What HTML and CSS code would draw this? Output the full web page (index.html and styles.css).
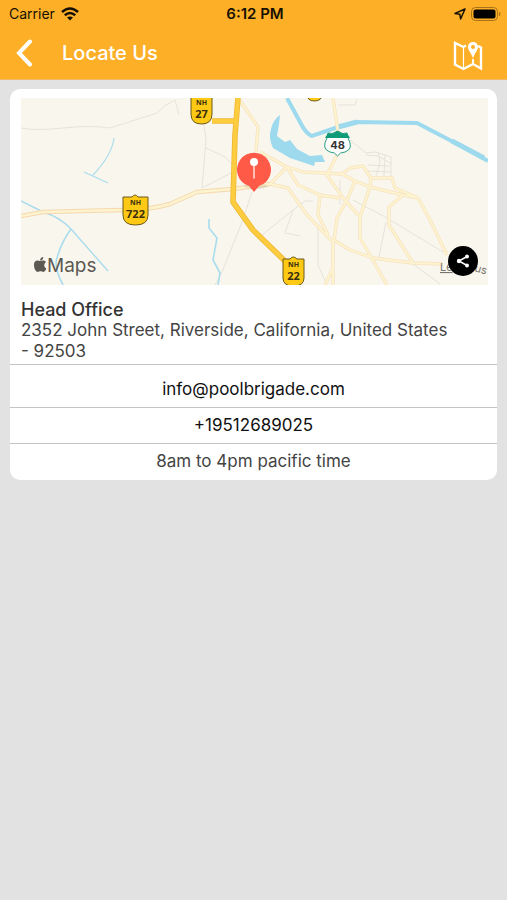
FILE: index.html
```html
<!DOCTYPE html>
<html lang="en">
<head>
    <meta charset="UTF-8">
    <meta name="viewport" content="width=device-width, initial-scale=1.0">
    <title>Locate Us</title>
    <link rel="stylesheet" href="styles.css">
</head>
<body>
    <header class="header">
        <div class="status-bar">
            <div class="status-left">
                <span>Carrier</span>
                <svg class="wifi" viewBox="0 0 18 14" width="18" height="14" fill="none" stroke="#161003" stroke-width="2.5">
                    <path d="M1 5 Q9 -2 17 5"/>
                    <path d="M3.8 8.2 Q9 3.8 14.2 8.2"/>
                    <path d="M9 13.5 L6 10.6 Q9 8.2 12 10.6 Z" fill="#161003" stroke="none"/>
                </svg>
            </div>
            <span class="time">6:12 PM</span>
            <div class="status-right">
                <svg viewBox="0 0 12 12" width="12" height="12" fill="none" stroke="#161003" stroke-width="1.5" stroke-linejoin="round">
                    <path d="M11 1 L1 5.4 L5.8 6.2 L6.6 11 Z"/>
                </svg>
                <svg viewBox="0 0 30 14" width="30" height="14">
                    <rect x="0.5" y="0.5" width="26" height="13" rx="4" fill="none" stroke="#a87318"/>
                    <rect x="2.5" y="2.5" width="22" height="9" rx="2" fill="#000"/>
                    <path d="M28 4.5 Q31 7 28 9.5 Z" fill="#a87318"/>
                </svg>
            </div>
        </div>
        <div class="nav-bar">
            <button class="icon-btn" type="button" aria-label="Back">
                <svg viewBox="0 0 18 28" width="18" height="28" fill="none" stroke="#fff" stroke-width="4">
                    <path d="M14 2.5 L3 14 L14 25.5" stroke-linecap="round" stroke-linejoin="miter"/>
                </svg>
            </button>
            <h1>Locate Us</h1>
            <button class="icon-btn icon-map" type="button" aria-label="Open map">
                <svg viewBox="0 0 30 30" width="30" height="30" fill="none" stroke="#fff" stroke-width="2">
                    <path d="M13 4.5 L10.5 6 L2 2 V23.5 L10.5 28 L20 23 L28 27.5 V6.5 L25 5" stroke-width="2.4"/>
                    <path d="M10.5 6 V27" stroke-width="1.2"/>
                    <path d="M20 18 V23"/>
                    <path d="M20 1 C16.8 1 15 3.3 15 6 C15 9.5 18.5 12 20 17.5 C21.5 12 25 9.5 25 6 C25 3.3 23.2 1 20 1 Z M20 4 A2 2 0 1 1 20 8 A2 2 0 1 1 20 4 Z" fill="#fff" fill-rule="evenodd" stroke="none"/>
                </svg>
            </button>
        </div>
    </header>

    <main class="card">
        <div class="map">
            <svg class="map-canvas" viewBox="21 98 467 187" role="img" aria-label="Map of the head office">
                <rect x="21" y="98" width="467" height="187" fill="#f9f6ee"/>

                <!-- minor roads -->
                <g fill="none" stroke="#e6e3db" stroke-width="1">
                    <path d="M21 128 Q34 131 63 128 T110 128 L157 113 Q165 104 175 100 L179 115"/>
                    <path d="M202 112 L206 140 L202 188 L233 172 M206 148 L225 157 L233 165"/>
                    <path d="M252 192 L242 222 L230 252 L222 272 L215 285"/>
                    <path d="M262 235 L293 210 L305 201 L313 201 M293 210 L285 233 L300 236"/>
                    <path d="M318 228 V265 L327 285"/>
                    <path d="M353 200 L387 218 L443 252 M379 257 L386 222"/>
                    <path d="M350 140 L366 153 L376 152 L391 157 V176 M366 155 L378 156 L392 164 M378 152 L380 162 L376 176 M368 165 L390 166 M385 155 L384 176 M368 171 L391 172"/>
                    <path d="M338 105 H355 L357 99 M340 180 V205 M413 264 L440 284"/>
                </g>

                <!-- water -->
                <g fill="none" stroke="#a9dced" stroke-width="1.6">
                    <path d="M114 138 Q112 155 93 175 M84 172 L108 183" stroke-width="1.2"/>
                    <path d="M21 201 L43 212 Q60 217 71 229 L108 271" stroke-width="1.4"/>
                    <path d="M71 229 Q60 244 56 262 Q56 272 63 285"/>
                    <path d="M209 219 V228 L217 238 L213 260 L220 273 L218 285"/>
                </g>
                <path d="M280 115 L279 124 L277 136 L285 142 L290 140 L297 149 L310 156 L322 155 L325 162 L315 162 L314 166 L290 158 L273 148 Q268 138 271 129 Q273 120 280 115 Z" fill="#9ddaee"/>
                <path d="M287 98 L300 122 Q306 134 312 136 L338 127 L357 122 L417 123 L440 135 L463 147 L488 161" fill="none" stroke="#9ddaee" stroke-width="4"/>
                <path d="M338 127 L357 122 M452 141 L484 158" fill="none" stroke="#9ddaee" stroke-width="5"/>

                <!-- town roads: casing and fill share one shape -->
                <defs>
                    <path id="roads" d="M241 102 L258 127 L256 152 M260 152 L287 167 L303 172 L342 174 L350 168 L363 166 L371 178 H392 L395 188 L418 198 L430 220 L447 255
                        M287 167 L270 184 L288 188 L307 215 L333 242 V285
                        M287 167 L298 185 L320 195 L340 198
                        M320 195 L318 215 L328 235
                        M333 98 L338 132 M337 155 L327 175 L343 198 L360 217
                        M342 174 L355 181 L370 187 L403 195 L389 207 V225 L413 263
                        M371 178 L370 187 L360 217 V238 L370 255 L387 285
                        M355 181 L347 200 L337 218 L334 240 L350 250 L373 258 L413 263 L443 264
                        M333 268 L325 285 M403 195 L418 198"/>
                    <path id="route722" d="M21 216 L43 212 L122 210 Q150 210 170 204 L197 192 L233 189 L270 184"/>
                    <path id="highway" d="M238 98 L235 135 L233 202 L253 230 L288 264 M212 121 H235"/>
                </defs>
                <g fill="none" stroke-linejoin="round">
                    <use href="#roads" stroke="#f7e2bf" stroke-width="3.4"/>
                    <use href="#roads" stroke="#fdf3cf" stroke-width="2"/>
                    <use href="#route722" stroke="#f5d8ae" stroke-width="4.6"/>
                    <use href="#route722" stroke="#fdf3cf" stroke-width="2.6"/>
                    <use href="#highway" stroke="#efb733" stroke-width="5.6"/>
                    <use href="#highway" stroke="#fdcd3f" stroke-width="4"/>
                </g>

                <!-- route shields -->
                <g class="shield">
                    <path d="M191 94 H212 V114 Q212 124 201.5 124 Q191 124 191 114 Z"/>
                    <text x="201.5" y="105" class="shield-nh">NH</text>
                    <text x="201.5" y="118" class="shield-no">27</text>

                    <path d="M123 197 H132 Q135 193 138 197 H148 V215 Q148 225 135.5 225 Q123 225 123 215 Z"/>
                    <text x="135.5" y="205" class="shield-nh">NH</text>
                    <text x="135.5" y="218" class="shield-no">722</text>

                    <path d="M283 259 H290 Q293 255 297 259 H304 V278 Q304 286 293.5 286 Q283 286 283 278 Z"/>
                    <text x="293.5" y="267" class="shield-nh">NH</text>
                    <text x="293.5" y="280" class="shield-no">22</text>

                    <path d="M307 94 H322 Q322 101 314.5 101 Q307 101 307 94 Z"/>
                </g>
                <path d="M328 133 Q332 135 337.5 131 Q343 135 347 133 L348 138 Q354 149 345 152 Q340 152 337.5 156 Q335 152 330 152 Q321 149 327 138 Z" fill="#fff" stroke="#279d80"/>
                <path d="M328 133 Q332 135 337.5 131 Q343 135 347 133 L350 138 H325 Z" fill="#0f9b78"/>
                <text x="337.5" y="149" class="shield-48">48</text>

                <!-- office pin -->
                <ellipse cx="256" cy="186" rx="12" ry="3" fill="#000" opacity="0.08"/>
                <path d="M254 192 L249 186 A17 17 0 1 1 259 186 Z" fill="#ff5a47"/>
                <path d="M254 165 V178" stroke="#ffd9d3" stroke-width="1.6" stroke-linecap="round"/>
                <circle cx="254" cy="162" r="4" fill="#fff"/>

                <!-- map credit -->
                <g fill="#5c5952">
                    <path d="M40 261 C38 260 34 260 34 265 C34 269 36 272 38 272 C39 272 39 271.3 40.5 271.3 C42 271.3 42 272 43.2 272 C44.8 272 46 269.5 46.3 268.5 C43.5 267 43.8 263.5 46 262 C44.5 260 42 260.5 40 261 Z"/>
                    <path d="M40 260.5 C40 258.5 41.5 257.2 43.2 257 C43.4 259 42 260.5 40 260.5 Z"/>
                    <text x="47" y="272" class="map-logo">Maps</text>
                </g>
                <text x="440" y="271" class="map-legal map-legal-link">Le</text>
                <text x="470" y="270" class="map-legal" transform="rotate(16 470 270)">rus</text>
            </svg>
            <button class="share-btn" type="button" aria-label="Share location">
                <svg viewBox="0 0 14 14" width="14" height="14" fill="#fff">
                    <path d="M11 2.5 L3 7 L11 11.5" fill="none" stroke="#fff" stroke-width="1.5"/>
                    <circle cx="11" cy="2.5" r="2"/>
                    <circle cx="3" cy="7" r="2.2"/>
                    <circle cx="11" cy="11.5" r="2"/>
                </svg>
            </button>
        </div>

        <div class="address">
            <h2>Head Office</h2>
            <p>2352 John Street, Riverside, California, United States - 92503</p>
        </div>
        <a class="row row-email" href="mailto:info@poolbrigade.com">info@poolbrigade.com</a>
        <a class="row" href="tel:+19512689025">+19512689025</a>
        <p class="row row-hours">8am to 4pm pacific time</p>
    </main>
</body>
</html>
```

FILE: styles.css
```css
* {
    box-sizing: border-box;
}
body {
    margin: 0;
    min-height: 100vh;
    background-color: #e2e2e2;
    font-family: Inter, "Liberation Sans", sans-serif;
    color: #444;
}
h1, h2, p {
    margin: 0;
}
.header {
    background-color: #fdaf27;
    border-bottom: 1px solid #eebb64;
}
.status-bar {
    display: grid;
    grid-template-columns: 1fr auto 1fr;
    align-items: center;
    height: 27px;
    padding: 0 6px 0 9px;
    font-size: 14px;
    color: #161003;
}
.status-left, .status-right {
    display: flex;
    align-items: center;
    gap: 6px;
}
.status-right {
    justify-content: flex-end;
    gap: 5px;
}
.time {
    font-size: 15px;
    font-weight: 600;
}
.nav-bar {
    display: flex;
    align-items: center;
    height: 52px;
    padding: 0 24px 0 16px;
}
.nav-bar h1 {
    flex: 1;
    margin-left: 28px;
    font-size: 20px;
    font-weight: 500;
    color: #fff;
}
.icon-btn {
    display: flex;
    padding: 0;
    border: none;
    background: none;
    cursor: pointer;
}
.icon-map {
    padding-top: 6px;
}
.card {
    margin: 9px 10px;
    background-color: #fff;
    border-radius: 10px;
    overflow: hidden;
}
.map {
    position: relative;
    margin: 9px 9px 0 11px;
}
.map-canvas {
    display: block;
    width: 100%;
}
.shield path {
    fill: #fdc914;
    stroke: #6b5a1c;
}
.shield text {
    fill: #3a2f0c;
    font-family: "Open Sans", sans-serif;
    font-weight: 700;
    text-anchor: middle;
}
.shield-nh {
    font-size: 7px;
}
.shield-no {
    font-size: 11px;
}
.shield-48 {
    fill: #333;
    font-size: 11px;
    font-weight: 700;
    text-anchor: middle;
}
.map-logo {
    font-size: 19px;
}
.map-legal {
    fill: #77746d;
    font-size: 11px;
}
.map-legal-link {
    text-decoration: underline;
}
.share-btn {
    position: absolute;
    right: 10px;
    bottom: 9px;
    display: flex;
    align-items: center;
    justify-content: center;
    width: 30px;
    height: 30px;
    padding: 0;
    border: none;
    border-radius: 50%;
    background-color: #000;
    cursor: pointer;
}
.address {
    padding: 14px 40px 2px 11px;
    font-size: 17px;
    line-height: 21px;
}
.address h2 {
    font-size: 18px;
    font-weight: 500;
    line-height: 21px;
    color: #333;
}
.row {
    display: block;
    padding: 7px 10px;
    border-top: 1px solid #c4c4c4;
    font-size: 17px;
    line-height: 21px;
    text-align: center;
    text-decoration: none;
    color: #111;
}
.row-email {
    padding-top: 14px;
}
.row-hours {
    padding-bottom: 8px;
    color: #444;
}
```
